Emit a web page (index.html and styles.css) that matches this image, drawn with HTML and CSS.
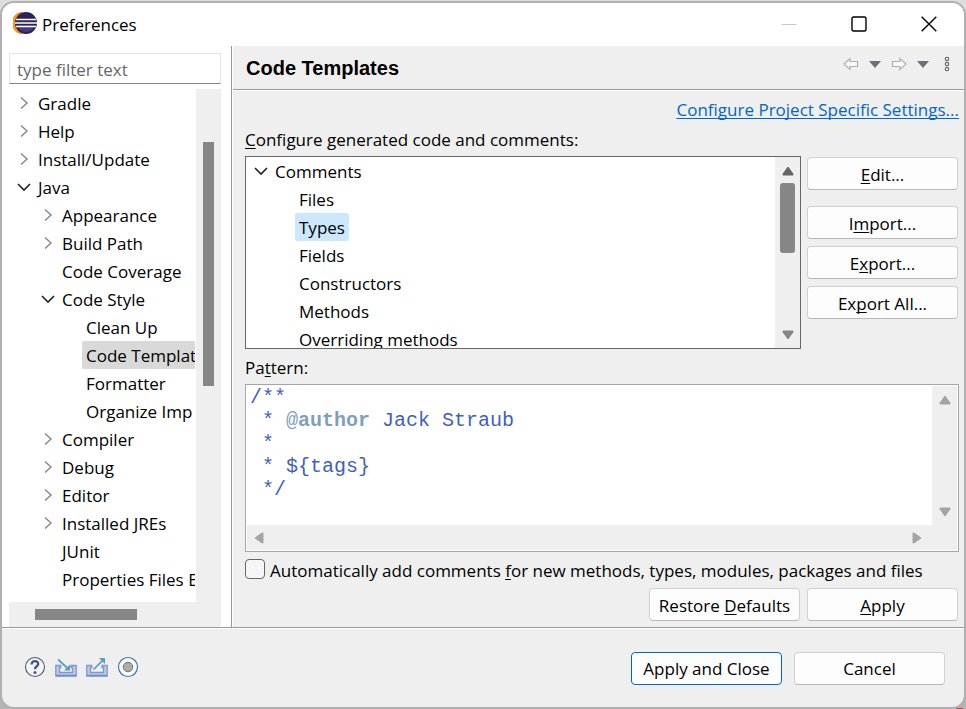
FILE: index.html
```html
<!DOCTYPE html>
<html lang="en">
<head>
<meta charset="utf-8">
<meta name="viewport" content="width=device-width, initial-scale=1">
<title>Preferences</title>
<link rel="stylesheet" href="styles.css">
</head>
<body>
<svg class="defs" aria-hidden="true">
  <symbol id="right" viewBox="0 0 14 14"><path d="M4 1.5 10 7 4 12.5" fill="none" stroke="#8a8a8a" stroke-width="1.5"/></symbol>
  <symbol id="down" viewBox="0 0 14 14"><path d="M1 4 7 10 13 4" fill="none" stroke="#222" stroke-width="1.6"/></symbol>
  <symbol id="tri" viewBox="0 0 12 10"><path d="M6 1 11 8v1H1V8Z" fill="currentColor" stroke="currentColor" stroke-linejoin="round"/></symbol>
</svg>
<div class="dialog" role="dialog" aria-labelledby="caption">
  <header class="titlebar">
    <svg class="logo" viewBox="0 0 24 24" aria-hidden="true">
      <path d="M10 .8A11 11 0 0 0 10 23.200A13 13 0 0 1 10 .8Z" fill="#f7941e"/>
      <circle cx="13" cy="12" r="11" fill="#2c2255"/>
      <path d="M5 14h16a8 7 0 0 1-16 0Z" fill="#473788"/>
      <path d="M3 8.500h20M2 12h22M3 15.500h20" stroke="#fff" stroke-width="1.400"/>
    </svg>
    <span class="caption" id="caption">Preferences</span>
    <button class="winbtn" aria-label="Minimize" disabled><svg viewBox="0 0 16 16"><path d="M.5 8.500h15" stroke="#c8c8c8"/></svg></button>
    <button class="winbtn" aria-label="Maximize"><svg viewBox="0 0 16 16"><rect x="1" y="1" width="14" height="14" rx="1.500" fill="none" stroke="#000" stroke-width="1.400"/></svg></button>
    <button class="winbtn" aria-label="Close"><svg viewBox="0 0 16 16"><path d="m.7.7 14.600 14.600M15.300.7.7 15.300" stroke="#000" stroke-width="1.400"/></svg></button>
  </header>

  <div class="main">
    <nav class="side">
      <input class="filter" type="text" placeholder="type filter text" aria-label="Filter">
      <div class="treebox">
        <ul class="tree" role="tree">
          <li><svg><use href="#right"/></svg><span>Gradle</span></li>
          <li><svg><use href="#right"/></svg><span>Help</span></li>
          <li><svg><use href="#right"/></svg><span>Install/Update</span></li>
          <li><svg><use href="#down"/></svg><span>Java</span></li>
          <li class="l2"><svg><use href="#right"/></svg><span>Appearance</span></li>
          <li class="l2"><svg><use href="#right"/></svg><span>Build Path</span></li>
          <li class="l2 leaf"><span>Code Coverage</span></li>
          <li class="l2"><svg><use href="#down"/></svg><span>Code Style</span></li>
          <li class="l3 leaf"><span>Clean Up</span></li>
          <li class="l3 leaf"><span class="current">Code Templat</span></li>
          <li class="l3 leaf"><span>Formatter</span></li>
          <li class="l3 leaf"><span>Organize Imp</span></li>
          <li class="l2"><svg><use href="#right"/></svg><span>Compiler</span></li>
          <li class="l2"><svg><use href="#right"/></svg><span>Debug</span></li>
          <li class="l2"><svg><use href="#right"/></svg><span>Editor</span></li>
          <li class="l2"><svg><use href="#right"/></svg><span>Installed JREs</span></li>
          <li class="l2 leaf"><span>JUnit</span></li>
          <li class="l2 leaf"><span>Properties Files E</span></li>
        </ul>
        <div class="side-v"><i></i></div>
        <div class="side-h"><i></i></div>
      </div>
    </nav>

    <section class="page">
      <div class="pagehead">
        <h1>Code Templates</h1>
        <button class="tool" aria-label="Back"><svg width="16" height="14" viewBox="0 0 16 14"><path d="M1 7 7 1.500V4.500h7.500v5H7v3Z" fill="#f8f8f8" stroke="#b0b0b0" stroke-width="1.200"/></svg></button>
        <button class="tool" aria-label="Back history"><svg width="12" height="7" viewBox="0 0 12 7"><path d="M0 0h12L6 7Z" fill="#6e7073"/></svg></button>
        <button class="tool" aria-label="Forward"><svg width="16" height="14" viewBox="0 0 16 14"><path d="M15 7 9 1.500V4.500H1.500v5H9v3Z" fill="#f8f8f8" stroke="#b0b0b0" stroke-width="1.200"/></svg></button>
        <button class="tool" aria-label="Forward history"><svg width="12" height="7" viewBox="0 0 12 7"><path d="M0 0h12L6 7Z" fill="#6e7073"/></svg></button>
        <button class="tool more" aria-label="View menu"><svg width="6" height="16" viewBox="0 0 6 16"><g fill="#fff" stroke="#66686b" stroke-width="1.200"><circle cx="3" cy="3" r="1.700"/><circle cx="3" cy="8" r="1.700"/><circle cx="3" cy="13" r="1.700"/></g></svg></button>
      </div>
      <div class="content">
        <a class="link" href="#project">Configure Project Specific Settings...</a>
        <div class="label" id="codelabel"><u>C</u>onfigure generated code and comments:</div>
        <div class="row">
          <div class="listbox">
            <ul class="tree" role="tree" aria-labelledby="codelabel">
              <li><svg><use href="#down"/></svg><span>Comments</span></li>
              <li class="l2 leaf"><span>Files</span></li>
              <li class="l2 leaf"><span class="picked">Types</span></li>
              <li class="l2 leaf"><span>Fields</span></li>
              <li class="l2 leaf"><span>Constructors</span></li>
              <li class="l2 leaf"><span>Methods</span></li>
              <li class="l2 leaf"><span>Overriding methods</span></li>
            </ul>
            <div class="bar dark"><svg class="arrow"><use href="#tri"/></svg><i></i><svg class="arrow flip"><use href="#tri"/></svg></div>
          </div>
          <div class="stack">
            <button class="btn first"><u>E</u>dit...</button>
            <button class="btn">I<u>m</u>port...</button>
            <button class="btn">E<u>x</u>port...</button>
            <button class="btn">Ex<u>p</u>ort All...</button>
          </div>
        </div>
        <div class="label pattern" id="patlabel">Pa<u>t</u>tern:</div>
        <div class="editor">
          <div class="code" role="textbox" aria-multiline="true" aria-labelledby="patlabel">
            <div>/**</div>
            <div> * <span class="tag">@</span><b class="tag">author</b> Jack Straub</div>
            <div> *</div>
            <div> * ${tags}</div>
            <div> */</div>
          </div>
          <div class="bar"><svg class="arrow"><use href="#tri"/></svg><svg class="arrow flip"><use href="#tri"/></svg></div>
          <div class="hbar"><svg class="arrow left"><use href="#tri"/></svg><svg class="arrow right"><use href="#tri"/></svg></div>
        </div>
        <label class="check"><input type="checkbox"><span>Automatically add comments <u>f</u>or new methods, types, modules, packages and files</span></label>
        <div class="actions">
          <button class="btn">Restore <u>D</u>efaults</button>
          <button class="btn"><u>A</u>pply</button>
        </div>
      </div>
    </section>
  </div>

  <footer class="footer">
    <button class="icon" aria-label="Help"><svg viewBox="0 0 22 22"><circle cx="11" cy="11" r="9.500" fill="#f4f5f8" stroke="#4d5878" stroke-width="1.100"/><path d="M7.600 8.500c0-4.600 7-4.300 6.600-.3-.2 2-3.200 2.300-3.200 5" fill="none" stroke="#465782" stroke-width="2.300"/><circle cx="11" cy="16.500" r="1.500" fill="#465782"/></svg></button>
    <button class="icon" aria-label="Import"><svg viewBox="0 0 22 22"><path d="M.8 9.500h5v2H4.500v5h13v-5H16v-2h5.200V20H.8Z" fill="#b9cbe9" stroke="#7e98c9" stroke-width="1.300"/><path d="M1 19.500h20" stroke="#6f8cc4" stroke-width="1.600"/><path d="m3 3.500 11 10" stroke="#5b9cc0" stroke-width="1.700"/><path d="M15 8.500v6H9Z" fill="#5b9cc0"/></svg></button>
    <button class="icon" aria-label="Export"><svg viewBox="0 0 22 22"><path d="M.8 9.500h5v2H4.500v5h13v-5H16v-2h5.200V20H.8Z" fill="#b9cbe9" stroke="#7e98c9" stroke-width="1.300"/><path d="M1 19.500h20" stroke="#6f8cc4" stroke-width="1.600"/><path d="m7.500 13.500 10-10" stroke="#5b9cc0" stroke-width="1.700"/><path d="M13 2h6v6Z" fill="#5b9cc0"/></svg></button>
    <button class="icon" aria-label="Record preferences"><svg viewBox="0 0 22 22"><circle cx="11" cy="11" r="9.500" fill="#fff" stroke="#3778ad" stroke-width="1.200"/><circle cx="11" cy="11" r="4.800" fill="#a5a5a5" stroke="#777"/><path d="M7 9h8M7 12h8" stroke="#bcbcbc"/></svg></button>
    <span class="grow"></span>
    <button class="btn primary">Apply and Close</button>
    <button class="btn">Cancel</button>
  </footer>
</div>
</body>
</html>
```
FILE: styles.css
```css
* { box-sizing: border-box; }
body {
  margin: 0;
  min-height: 100vh;
  padding: 1px 0;
  display: flex;
  background:
    repeating-linear-gradient(90deg, #c8403c 0 7px, #b4b4b4 7px 12px) 152px 100% / 100% 2px no-repeat,
    linear-gradient(#dedede 50%, #b4b4b4 50%);
  font: 17px/28px "Open Sans", "Noto Sans", sans-serif;
  color: #000;
}
.defs { position: absolute; width: 0; height: 0; }
ul { list-style: none; margin: 0; padding: 0; }
button, input { font: inherit; color: inherit; }
u { text-decoration-thickness: 1px; text-underline-offset: 2px; text-decoration-skip-ink: none; }

.dialog {
  flex: 1;
  min-width: 0;
  display: flex;
  flex-direction: column;
  border: 2px solid #b0b0b0;
  border-radius: 14px;
  background: #efefef;
  overflow: hidden;
}
.titlebar {
  display: flex;
  align-items: center;
  height: 43px;
  padding-left: 11px;
  background: #fff;
}
.logo { width: 24px; height: 24px; margin: 0 5px 4px 0; }
.caption { flex: 1; }
.winbtn { width: 70px; height: 43px; padding: 0 0 2px; border: 0; background: none; display: grid; place-items: center; }
.winbtn svg { width: 16px; height: 16px; display: block; }

.main { flex: 1; display: flex; border-bottom: 1px solid #999; }
.side {
  flex: 0 0 230px;
  display: flex;
  flex-direction: column;
  gap: 5px;
  padding: 7px 10px 0 7px;
  background: #fff;
  border-right: 1px solid #999;
}
.filter {
  width: 100%;
  height: 31px;
  padding: 2px 7px 0;
  border: 1px solid #e3e3e3;
  border-bottom-color: #868686;
  background: #fff;
}
.filter::placeholder { color: #666; opacity: 1; }
.treebox {
  flex: 1;
  display: grid;
  grid-template: 1fr 25px / minmax(0, 1fr) 25px;
  background: #fff;
}
.tree { overflow: hidden; }
.tree li { display: flex; align-items: center; height: 28px; padding-left: 8px; white-space: nowrap; }
.tree li svg { flex: none; width: 14px; height: 14px; margin-right: 3px; }
.tree li span { height: 28px; padding: 1px 4px 0; border-radius: 2px; }
.tree .l2 { padding-left: 32px; }
.tree .l3 { padding-left: 56px; }
.tree .leaf::before { content: ""; flex: none; width: 17px; }
.tree .current { flex: 1; background: #d9d9d9; }
.tree .picked { background: #cce8ff; }
.side .tree { margin-right: 1px; }
.side-v { background: #efefef; padding: 53px 7px 0; }
.side-v i { display: block; height: 244px; background: #868686; }
.side-h { grid-column: 1 / 3; background: #efefef; padding: 7px 26px; }
.side-h i { display: block; width: 102px; height: 11px; background: #868686; }

.page { flex: 1; min-width: 0; border-left: 1px solid #fff; }
.pagehead {
  display: flex;
  align-items: center;
  height: 44px;
  padding: 1px 13px 0;
  border-bottom: 1px solid #999;
  box-shadow: 0 1px #fff;
}
h1 { flex: 1; margin: 0; font: bold 20px/28px "Liberation Sans", sans-serif; }
.tool { border: 0; padding: 0; width: 24px; height: 28px; margin-top: -8px; background: none; display: grid; place-items: center; }
.more { margin-right: -8px; }
.content { display: flex; flex-direction: column; padding: 6px 5px 6px 12px; }
.link { align-self: flex-end; color: #0066cc; text-decoration-thickness: 1px; text-underline-offset: 2px; text-decoration-skip-ink: none; }
.label { margin: 2px 0; }
.row { display: flex; gap: 6px; }
.listbox { flex: 1; min-width: 0; display: flex; height: 193px; border: 1px solid #666; background: #fff; }
.listbox .tree { flex: 1; }
.bar { width: 25px; padding: 9px 0 8px; background: #efefef; color: #a3a3a3; display: flex; flex-direction: column; align-items: center; justify-content: space-between; }
.bar.dark { justify-content: flex-start; color: #868686; }
.bar i { width: 15px; height: 70px; margin: 7px 0 auto; border-radius: 3px; background: #868686; }
.bar.dark .arrow:first-child { color: #666; }
.arrow { flex: none; width: 12px; height: 10px; }
.flip { transform: rotate(180deg); }
.left { transform: rotate(-90deg); }
.right { transform: rotate(90deg); }
.stack { display: flex; flex-direction: column; gap: 7px; padding: 1px 1px 0 0; }
.first { margin-bottom: 9px; }
.btn {
  width: 151px;
  height: 33px;
  padding: 2px 0 0;
  border: 1px solid #d0d0d0;
  border-bottom-color: #b8b8b8;
  border-radius: 4px;
  background: #fdfdfd;
  white-space: nowrap;
}
.primary { border-color: #0067c0; }
.pattern { margin: 5px 0 2px; }
.editor {
  display: grid;
  grid-template: 139px 25px / minmax(0, 1fr) 25px;
  padding: 1px;
  border: 1px solid #a5a5aa;
  background: #fff;
}
.code { padding: 0 3px; font: 20px/23px "Liberation Mono", monospace; color: #3f5fbf; overflow: hidden; }
.code div { white-space: pre; }
.tag { color: #7f9fbf; }
.hbar { grid-column: 1 / 3; display: flex; align-items: center; justify-content: space-between; padding: 0 34px 0 6px; background: #efefef; color: #a3a3a3; }
.check { display: flex; align-items: flex-start; gap: 5px; margin-top: 5px; white-space: nowrap; }
.check input { appearance: none; flex: none; width: 20px; height: 20px; margin: 2px 0 0; border: 1px solid #666; border-radius: 4px; background: #f6f6f6; }
.actions { display: flex; justify-content: flex-end; gap: 7px; margin: 3px 1px 0 0; }

.footer { display: flex; align-items: center; height: 79px; padding: 0 19px 0 22px; border-top: 1px solid #fff; }
.icon { width: 22px; height: 22px; margin: 0 9px 2px 0; padding: 0; border: 0; background: none; }
.icon svg { display: block; width: 22px; height: 22px; }
.grow { flex: 1; }
.footer .btn + .btn { margin-left: 12px; }
```
